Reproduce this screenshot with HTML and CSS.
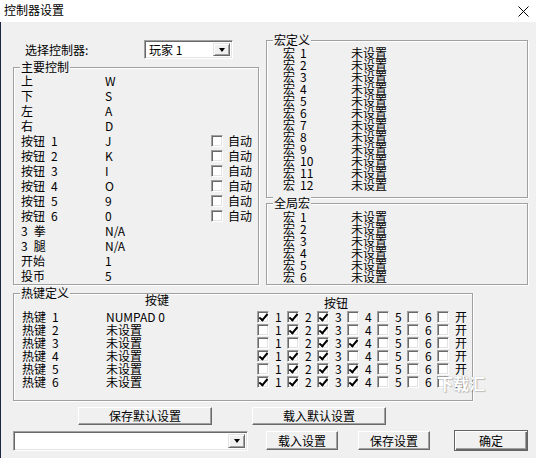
FILE: index.html
```html
<!DOCTYPE html>
<html lang="zh-CN">
<head>
<meta charset="utf-8">
<title>控制器设置</title>
<link rel="stylesheet" href="styles.css">
</head>
<body>
<div class="window">
  <div class="titlebar">
    <span class="title">控制器设置</span>
    <svg class="close" width="11" height="11" viewBox="0 0 11 11"><path d="M0.5 0.5 L10.5 10.5 M10.5 0.5 L0.5 10.5" stroke="#000" stroke-width="1" fill="none"/></svg>
  </div>
  <div class="client">
    <div class="top">
      <div class="leftcol">
        <div class="selrow">
          <span class="sellabel">选择控制器:</span>
          <div class="combo combo-sel">
            <span class="combo-text">玩家 1</span>
            <span class="combo-btn"><span class="tri"></span></span>
          </div>
        </div>
        <div class="group g-main">
          <span class="gtitle">主要控制</span>
          <div class="mrow"><span class="k">上</span><span class="v">W</span></div>
          <div class="mrow"><span class="k">下</span><span class="v">S</span></div>
          <div class="mrow"><span class="k">左</span><span class="v">A</span></div>
          <div class="mrow"><span class="k">右</span><span class="v">D</span></div>
          <div class="mrow"><span class="k">按钮<span class="n">1</span></span><span class="v">J</span><span class="cb"></span><span class="cbl">自动</span></div>
          <div class="mrow"><span class="k">按钮<span class="n">2</span></span><span class="v">K</span><span class="cb"></span><span class="cbl">自动</span></div>
          <div class="mrow"><span class="k">按钮<span class="n">3</span></span><span class="v">I</span><span class="cb"></span><span class="cbl">自动</span></div>
          <div class="mrow"><span class="k">按钮<span class="n">4</span></span><span class="v">O</span><span class="cb"></span><span class="cbl">自动</span></div>
          <div class="mrow"><span class="k">按钮<span class="n">5</span></span><span class="v">9</span><span class="cb"></span><span class="cbl">自动</span></div>
          <div class="mrow"><span class="k">按钮<span class="n">6</span></span><span class="v">0</span><span class="cb"></span><span class="cbl">自动</span></div>
          <div class="mrow"><span class="k">3<span class="n">拳</span></span><span class="v">N/A</span></div>
          <div class="mrow"><span class="k">3<span class="n">腿</span></span><span class="v">N/A</span></div>
          <div class="mrow"><span class="k">开始</span><span class="v">1</span></div>
          <div class="mrow"><span class="k">投币</span><span class="v">5</span></div>
        </div>
      </div>
      <div class="rightcol">
        <div class="group g-macro">
          <span class="gtitle">宏定义</span>
          <div class="xrow"><span class="xk">宏</span><span class="xn">1</span><span>未设置</span></div>
          <div class="xrow"><span class="xk">宏</span><span class="xn">2</span><span>未设置</span></div>
          <div class="xrow"><span class="xk">宏</span><span class="xn">3</span><span>未设置</span></div>
          <div class="xrow"><span class="xk">宏</span><span class="xn">4</span><span>未设置</span></div>
          <div class="xrow"><span class="xk">宏</span><span class="xn">5</span><span>未设置</span></div>
          <div class="xrow"><span class="xk">宏</span><span class="xn">6</span><span>未设置</span></div>
          <div class="xrow"><span class="xk">宏</span><span class="xn">7</span><span>未设置</span></div>
          <div class="xrow"><span class="xk">宏</span><span class="xn">8</span><span>未设置</span></div>
          <div class="xrow"><span class="xk">宏</span><span class="xn">9</span><span>未设置</span></div>
          <div class="xrow"><span class="xk">宏</span><span class="xn">10</span><span>未设置</span></div>
          <div class="xrow"><span class="xk">宏</span><span class="xn">11</span><span>未设置</span></div>
          <div class="xrow"><span class="xk">宏</span><span class="xn">12</span><span>未设置</span></div>
        </div>
        <div class="group g-global">
          <span class="gtitle">全局宏</span>
          <div class="xrow"><span class="xk">宏</span><span class="xn">1</span><span>未设置</span></div>
          <div class="xrow"><span class="xk">宏</span><span class="xn">2</span><span>未设置</span></div>
          <div class="xrow"><span class="xk">宏</span><span class="xn">3</span><span>未设置</span></div>
          <div class="xrow"><span class="xk">宏</span><span class="xn">4</span><span>未设置</span></div>
          <div class="xrow"><span class="xk">宏</span><span class="xn">5</span><span>未设置</span></div>
          <div class="xrow"><span class="xk">宏</span><span class="xn">6</span><span>未设置</span></div>
        </div>
      </div>
    </div>

    <div class="group g-hot">
      <span class="gtitle">热键定义</span>
      <div class="hkh"><span class="hkh1">按键</span><span class="hkh2">按钮</span></div>
      <div class="hrow"><span class="hk">热键<span class="n">1</span></span><span class="hv">NUMPAD 0</span>
        <span class="cell"><span class="cb on"></span><span class="lbl">1</span></span><span class="cell"><span class="cb on"></span><span class="lbl">2</span></span><span class="cell"><span class="cb on"></span><span class="lbl">3</span></span><span class="cell"><span class="cb"></span><span class="lbl">4</span></span><span class="cell"><span class="cb"></span><span class="lbl">5</span></span><span class="cell"><span class="cb"></span><span class="lbl">6</span></span><span class="cell"><span class="cb"></span><span class="lbl">开</span></span></div>
      <div class="hrow"><span class="hk">热键<span class="n">2</span></span><span class="hv">未设置</span>
        <span class="cell"><span class="cb"></span><span class="lbl">1</span></span><span class="cell"><span class="cb on"></span><span class="lbl">2</span></span><span class="cell"><span class="cb on"></span><span class="lbl">3</span></span><span class="cell"><span class="cb"></span><span class="lbl">4</span></span><span class="cell"><span class="cb"></span><span class="lbl">5</span></span><span class="cell"><span class="cb"></span><span class="lbl">6</span></span><span class="cell"><span class="cb"></span><span class="lbl">开</span></span></div>
      <div class="hrow"><span class="hk">热键<span class="n">3</span></span><span class="hv">未设置</span>
        <span class="cell"><span class="cb"></span><span class="lbl">1</span></span><span class="cell"><span class="cb"></span><span class="lbl">2</span></span><span class="cell"><span class="cb on"></span><span class="lbl">3</span></span><span class="cell"><span class="cb on"></span><span class="lbl">4</span></span><span class="cell"><span class="cb"></span><span class="lbl">5</span></span><span class="cell"><span class="cb"></span><span class="lbl">6</span></span><span class="cell"><span class="cb"></span><span class="lbl">开</span></span></div>
      <div class="hrow"><span class="hk">热键<span class="n">4</span></span><span class="hv">未设置</span>
        <span class="cell"><span class="cb on"></span><span class="lbl">1</span></span><span class="cell"><span class="cb on"></span><span class="lbl">2</span></span><span class="cell"><span class="cb on"></span><span class="lbl">3</span></span><span class="cell"><span class="cb"></span><span class="lbl">4</span></span><span class="cell"><span class="cb"></span><span class="lbl">5</span></span><span class="cell"><span class="cb"></span><span class="lbl">6</span></span><span class="cell"><span class="cb"></span><span class="lbl">开</span></span></div>
      <div class="hrow"><span class="hk">热键<span class="n">5</span></span><span class="hv">未设置</span>
        <span class="cell"><span class="cb"></span><span class="lbl">1</span></span><span class="cell"><span class="cb on"></span><span class="lbl">2</span></span><span class="cell"><span class="cb on"></span><span class="lbl">3</span></span><span class="cell"><span class="cb on"></span><span class="lbl">4</span></span><span class="cell"><span class="cb"></span><span class="lbl">5</span></span><span class="cell"><span class="cb"></span><span class="lbl">6</span></span><span class="cell"><span class="cb"></span><span class="lbl">开</span></span></div>
      <div class="hrow"><span class="hk">热键<span class="n">6</span></span><span class="hv">未设置</span>
        <span class="cell"><span class="cb on"></span><span class="lbl">1</span></span><span class="cell"><span class="cb on"></span><span class="lbl">2</span></span><span class="cell"><span class="cb on"></span><span class="lbl">3</span></span><span class="cell"><span class="cb on"></span><span class="lbl">4</span></span><span class="cell"><span class="cb"></span><span class="lbl">5</span></span><span class="cell"><span class="cb"></span><span class="lbl">6</span></span><span class="cell"><span class="cb"></span><span class="lbl">开</span></span></div>
      <span class="watermark">下载汇</span>
    </div>

    <div class="btnrow">
      <div class="btn btn-wide">保存默认设置</div>
      <div class="btn btn-wide btn-load">载入默认设置</div>
    </div>

    <div class="bottomrow">
      <div class="combo combo-file">
        <span class="combo-text"></span>
        <span class="combo-btn"><span class="tri"></span></span>
      </div>
      <div class="btn btn-small btn-loadset">载入设置</div>
      <div class="btn btn-small btn-saveset">保存设置</div>
      <div class="btn btn-default">确定</div>
    </div>
  </div>
</div>
</body>
</html>
```

FILE: styles.css
```css
* { box-sizing: border-box; }
html, body { margin: 0; padding: 0; }
body {
  width: 536px;
  height: 458px;
  overflow: hidden;
  background: #f0f0f0;
  font-family: "Noto Sans CJK SC", "Noto Sans", sans-serif;
  font-size: 12px;
  color: #000;
}
.window {
  width: 536px;
  height: 458px;
  display: flex;
  flex-direction: column;
}
.titlebar {
  height: 22px;
  background: #fff;
  display: flex;
  align-items: center;
  justify-content: space-between;
  padding: 0 7px 2px 4px;
  flex-shrink: 0;
}
.title { line-height: 12px; }
.close { display: block; margin-top: 2px; }

.client {
  flex: 1;
  background: #f0f0f0;
  border-left: 1px solid #1b2740;
  padding-left: 12px;
  display: flex;
  flex-direction: column;
}

.top {
  display: flex;
  gap: 7px;
  margin-top: 18px;
}
.leftcol {
  width: 246px;
  display: flex;
  flex-direction: column;
  gap: 8px;
}
.rightcol {
  width: 262px;
  display: flex;
  flex-direction: column;
  gap: 5px;
}

.selrow {
  height: 19px;
  display: flex;
  align-items: center;
  padding-left: 12px;
}
.sellabel { width: 119px; line-height: 12px; }

.combo {
  display: flex;
  border: 1px solid;
  border-color: #a0a0a0 #fff #fff #a0a0a0;
  box-shadow: inset 1px 1px #696969, inset -1px -1px #e3e3e3;
  background: #fff;
  padding: 2px;
}
.combo-sel { width: 89px; height: 19px; }
.combo-text { flex: 1; padding-left: 2px; line-height: 14px; }
.combo-btn {
  width: 17px;
  background: #f0f0f0;
  border: 1px solid;
  border-color: #e3e3e3 #696969 #696969 #e3e3e3;
  box-shadow: inset 1px 1px #fff, inset -1px -1px #a0a0a0;
  display: flex;
  align-items: center;
  justify-content: center;
}
.tri {
  width: 1px;
  height: 0;
  border-left: 3px solid transparent;
  border-right: 3px solid transparent;
  border-top: 4px solid #000;
}

.group {
  position: relative;
  border: 1px solid #a0a0a0;
  box-shadow: inset 1px 1px #fff, 1px 1px #fff;
}
.gtitle {
  position: absolute;
  top: -7px;
  left: 6px;
  padding: 0 1px;
  background: #f0f0f0;
  line-height: 12px;
  white-space: nowrap;
}

.g-main {
  height: 218px;
  padding: 5px 0 0 7px;
}
.mrow {
  display: flex;
  align-items: center;
  height: 15px;
  line-height: 12px;
}
.k { width: 84px; white-space: nowrap; }
.v { width: 106px; white-space: nowrap; }
.n { margin-left: 6px; }
.cbl { margin-left: 5px; }

.cb {
  position: relative;
  width: 12px;
  height: 12px;
  flex-shrink: 0;
  background: #fff;
  border: 1px solid;
  border-color: #a0a0a0 #fff #fff #a0a0a0;
  box-shadow: inset 1px 1px #696969, inset -1px -1px #e3e3e3;
}
.cb.on::after {
  content: "";
  position: absolute;
  left: 3px;
  top: 0px;
  width: 3px;
  height: 7px;
  border: solid #000;
  border-width: 0 2px 2px 0;
  transform: rotate(40deg);
}

.g-macro {
  height: 158px;
  padding: 6px 0 0 16px;
}
.g-global {
  height: 82px;
  padding: 7px 0 0 16px;
}
.xrow {
  display: flex;
  align-items: center;
  height: 12px;
  line-height: 12px;
}
.xk { width: 17px; }
.xn { width: 51px; }

.g-hot {
  width: 460px;
  height: 108px;
  margin-top: 8px;
  padding: 0 0 0 8px;
}
.hkh {
  display: flex;
  height: 16px;
  padding-left: 123px;
  line-height: 12px;
}
.hkh1 { width: 179px; }
.hkh2 { margin-top: 3px; }
.hrow {
  display: flex;
  align-items: center;
  height: 13px;
  line-height: 12px;
}
.hk { width: 84px; white-space: nowrap; }
.hv { width: 151px; white-space: nowrap; }
.cell {
  width: 30px;
  display: flex;
  align-items: center;
}
.lbl { margin-left: 6px; }

.watermark {
  position: absolute;
  left: 423px;
  top: 81px;
  font-size: 16px;
  line-height: 16px;
  font-weight: bold;
  color: #fff;
  text-shadow: 0 0 1px #9a9a9a, 1px 1px 1px rgba(0,0,0,0.2);
  white-space: nowrap;
}

.btn {
  background: #f0f0f0;
  border: 1px solid;
  border-color: #fff #696969 #696969 #fff;
  box-shadow: inset -1px -1px #a0a0a0;
  display: flex;
  align-items: center;
  justify-content: center;
  line-height: 12px;
  white-space: nowrap;
}
.btnrow {
  display: flex;
  height: 18px;
  margin-top: 6px;
  padding-left: 65px;
}
.btn-wide { width: 134px; height: 18px; }
.btn-load { margin-left: 40px; }

.bottomrow {
  display: flex;
  align-items: center;
  height: 21px;
  margin-top: 5px;
}
.combo-file { width: 235px; height: 20px; }
.btn-small { width: 72px; height: 19px; }
.btn-loadset { margin-left: 18px; }
.btn-saveset { margin-left: 20px; }
.btn-default {
  width: 74px;
  height: 21px;
  margin-left: 24px;
  border: 1px solid #646464;
  box-shadow: inset 1px 1px #fff, inset -1px -1px #696969, inset -2px -2px #a0a0a0;
}
```
